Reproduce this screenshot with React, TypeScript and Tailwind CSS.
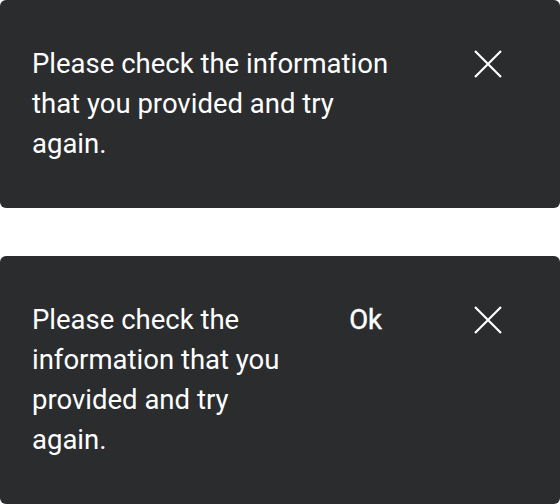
import React from "react";

type SnackbarProps = {
    message: string;
    actionLabel?: string;
    textWidthClass: string;
};

const CloseIcon = () => (
    <svg width="28" height="28" viewBox="0 0 28 28" fill="none">
        <path d="M1 1L27 27M27 1L1 27" stroke="white" strokeWidth="2.2" />
    </svg>
);

const Snackbar: React.FC<SnackbarProps> = ({ message, actionLabel, textWidthClass }) => {
    return (
        <div className="flex items-start rounded-md bg-[#2b2c2e] py-[44px] pl-8 pr-12 text-white">
            <p className={`${textWidthClass} text-[27.5px] leading-[40px]`}>{message}</p>

            <div className="ml-auto flex items-start">
                {actionLabel && (
                    <button className="mr-[78px] h-10 px-1 text-[27.5px] leading-[40px] text-white [-webkit-text-stroke:0.4px_white]">
                        {actionLabel}
                    </button>
                )}
                <button className="flex h-10 w-12 items-center justify-center">
                    <CloseIcon />
                </button>
            </div>
        </div>
    );
};

export default function App() {
    const message = "Please check the information that you provided and try again.";

    return (
        <div
            className="flex w-[560px] flex-col gap-12 bg-white"
            style={{ fontFamily: "Roboto, 'Noto Sans', sans-serif" }}
        >
            <Snackbar message={message} textWidthClass="w-[362px]" />
            <Snackbar message={message} actionLabel="Ok" textWidthClass="w-[262px]" />
        </div>
    );
}
